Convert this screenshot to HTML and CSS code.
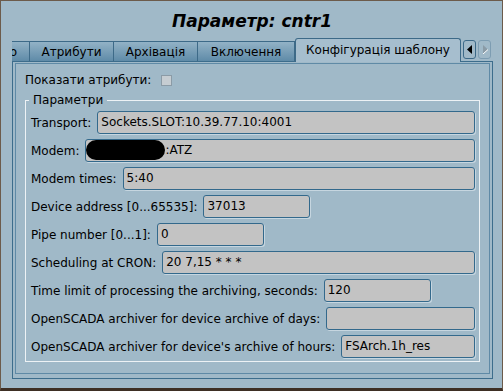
FILE: index.html
```html
<!DOCTYPE html>
<html lang="uk">
<head>
    <meta charset="UTF-8">
    <meta name="viewport" content="width=device-width, initial-scale=1.0">
    <title>Параметр: cntr1</title>
    <link rel="stylesheet" href="styles.css">
</head>
<body>
    <div class="window">
        <h1 class="title">Параметр: cntr1</h1>

        <div class="tabbar">
            <div class="tabs">
                <div class="tab cut">о</div>
                <div class="tab w84">Атрибути</div>
                <div class="tab w84">Архівація</div>
                <div class="tab w97">Включення</div>
                <div class="tab active">Конфігурація шаблону</div>
            </div>
            <div class="scroll-btns">
                <span class="sbtn"><svg width="6" height="9" viewBox="0 0 6 9"><path d="M5 0 L0 4.5 L5 9 Z" fill="#000"/></svg></span>
                <span class="sbtn off"><svg width="6" height="9" viewBox="0 0 6 9"><path d="M1 0 L6 4.5 L1 9 Z" fill="#8a9ba6"/><path d="M1 9 L6 4.5" stroke="#fff" stroke-width="1"/></svg></span>
            </div>
        </div>

        <div class="pane">
            <div class="inner">
                <div class="show-attrs">
                    <span>Показати атрибути:</span>
                    <span class="checkbox"></span>
                </div>

                <fieldset class="group">
                    <legend>Параметри</legend>

                    <div class="row">
                        <label>Transport:</label>
                        <div class="field">Sockets.SLOT:10.39.77.10:4001</div>
                    </div>
                    <div class="row">
                        <label>Modem:</label>
                        <div class="field"><span class="redact"></span>:ATZ</div>
                    </div>
                    <div class="row">
                        <label>Modem times:</label>
                        <div class="field">5:40</div>
                    </div>
                    <div class="row">
                        <label>Device address [0...65535]:</label>
                        <div class="field short">37013</div>
                    </div>
                    <div class="row">
                        <label>Pipe number [0...1]:</label>
                        <div class="field short">0</div>
                    </div>
                    <div class="row">
                        <label>Scheduling at CRON:</label>
                        <div class="field">20 7,15 * * *</div>
                    </div>
                    <div class="row">
                        <label>Time limit of processing the archiving, seconds:</label>
                        <div class="field short">120</div>
                    </div>
                    <div class="row">
                        <label>OpenSCADA archiver for device archive of days:</label>
                        <div class="field"></div>
                    </div>
                    <div class="row">
                        <label>OpenSCADA archiver for device's archive of hours:</label>
                        <div class="field">FSArch.1h_res</div>
                    </div>
                </fieldset>
            </div>
        </div>
    </div>
</body>
</html>
```

FILE: styles.css
```css
body {
    margin: 0;
    font-family: "DejaVu Sans", sans-serif;
    font-size: 12px;
    color: #000;
}
.window {
    width: 503px;
    height: 391px;
    box-sizing: border-box;
    background: #a0b9c8;
    border: 1px solid #6c5b4b;
    border-bottom: 3px solid #3e2f24;
    padding: 0 10px 0 11px;
}
.title {
    margin: 0;
    height: 37px;
    box-sizing: border-box;
    padding-top: 6px;
    line-height: 28px;
    font-size: 17px;
    font-weight: bold;
    font-style: italic;
    text-align: center;
}
.tabbar {
    display: flex;
    align-items: flex-end;
    height: 23px;
}
.tabs {
    display: flex;
    align-items: flex-end;
}
.tab {
    height: 20px;
    box-sizing: border-box;
    display: flex;
    align-items: center;
    justify-content: center;
    border: 1px solid #3d6a88;
    border-bottom: none;
    border-left: none;
    background: linear-gradient(#92b2c6, #5f8ba8);
    white-space: nowrap;
    overflow: hidden;
}
.tab.cut {
    width: 18px;
    justify-content: flex-end;
    padding-right: 12px;
}
.w84 {
    width: 84px;
}
.w97 {
    width: 97px;
}
.tab.active {
    position: relative;
    z-index: 1;
    width: 166px;
    height: 24px;
    margin-bottom: -1px;
    padding-bottom: 2px;
    background: #a6bece;
    border-left: 1px solid #3d6a88;
    border-radius: 3px 3px 0 0;
}
.scroll-btns {
    display: flex;
    gap: 2px;
    margin-left: 2px;
    margin-bottom: 2px;
}
.sbtn {
    width: 13px;
    height: 19px;
    box-sizing: border-box;
    display: flex;
    align-items: center;
    justify-content: center;
    border: 1px solid #3d6a88;
    border-radius: 3px;
    background: #a0b9c8;
}
.sbtn.off {
    border-color: #7d9db2;
}
.pane {
    width: 481px;
    height: 318px;
    box-sizing: border-box;
    border: 1px solid #3d6d8c;
    padding: 1px 2px 4px 2px;
}
.inner {
    height: 100%;
    box-sizing: border-box;
    border: 1px solid #5f8aa6;
    padding: 9px 9px 0 9px;
}
.show-attrs {
    display: flex;
    align-items: center;
    height: 14px;
    gap: 10px;
}
.checkbox {
    width: 11px;
    height: 11px;
    box-sizing: border-box;
    border: 1px solid #8b9ba6;
    background: #c6cdd2;
}
.group {
    margin: 6px 0 0 0;
    padding: 4px 4px 3px 5px;
    border: 1px solid #edf2f5;
    display: flex;
    flex-direction: column;
    gap: 5px;
}
.group legend {
    margin-left: -2px;
    padding: 0 4px;
    line-height: 14px;
}
.row {
    display: flex;
    align-items: center;
    gap: 6px;
}
.row label {
    white-space: nowrap;
}
.field {
    flex: 1;
    height: 23px;
    box-sizing: border-box;
    border: 1px solid #33698c;
    border-radius: 3px;
    background: #c3c3c3;
    padding: 0 3px;
    line-height: 21px;
    white-space: nowrap;
    box-shadow: 1px 1px 0 #c6d6e0;
}
.field.short {
    flex: none;
    width: 107px;
}
.redact {
    display: inline-block;
    vertical-align: top;
    width: 79px;
    height: 20px;
    margin: 0 0 0 -3px;
    border-radius: 10px;
    background: #000;
}
```
